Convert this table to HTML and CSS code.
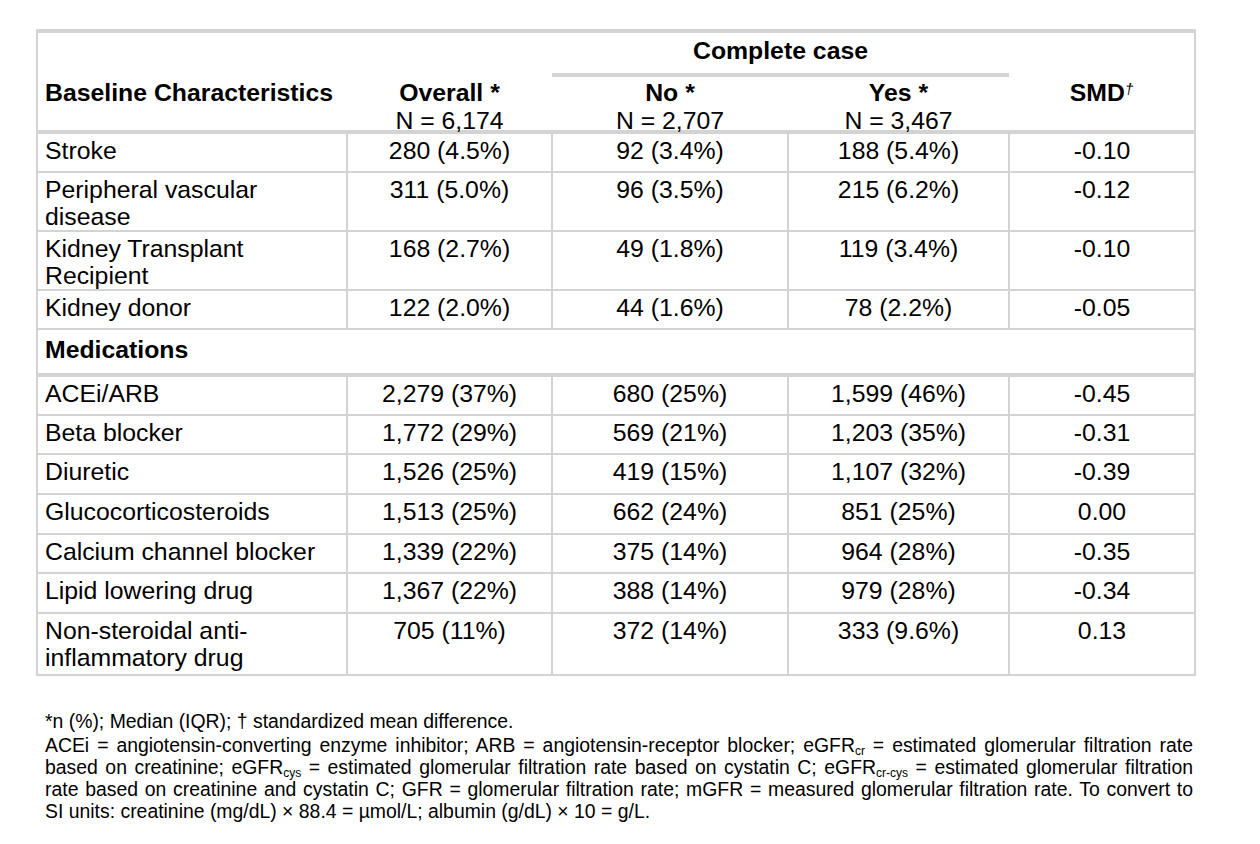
FILE: index.html
```html
<!DOCTYPE html>
<html lang="en">
<head>
    <meta charset="UTF-8">
    <meta name="viewport" content="width=device-width, initial-scale=1.0">
    <title>Baseline Characteristics by Complete Case</title>
    <link rel="stylesheet" href="styles.css">
</head>
<body>

    <div class="page">
        <table class="summary">
            <colgroup>
                <col class="col-label">
                <col class="col-overall">
                <col class="col-no">
                <col class="col-yes">
                <col class="col-smd">
            </colgroup>
            <thead>
                <tr class="spanner-row">
                    <th></th>
                    <th></th>
                    <th colspan="2" class="spanner">Complete case</th>
                    <th></th>
                </tr>
                <tr class="label-row">
                    <th class="left">Baseline Characteristics</th>
                    <th>Overall *<span class="n">N = 6,174</span></th>
                    <th class="under-spanner">No *<span class="n">N = 2,707</span></th>
                    <th class="under-spanner">Yes *<span class="n">N = 3,467</span></th>
                    <th>SMD<sup class="dagger">†</sup></th>
                </tr>
            </thead>
            <tbody>
                <tr>
                    <td>Stroke</td>
                    <td>280 (4.5%)</td>
                    <td>92 (3.4%)</td>
                    <td>188 (5.4%)</td>
                    <td>-0.10</td>
                </tr>
                <tr>
                    <td>Peripheral vascular<br>disease</td>
                    <td>311 (5.0%)</td>
                    <td>96 (3.5%)</td>
                    <td>215 (6.2%)</td>
                    <td>-0.12</td>
                </tr>
                <tr>
                    <td>Kidney Transplant<br>Recipient</td>
                    <td>168 (2.7%)</td>
                    <td>49 (1.8%)</td>
                    <td>119 (3.4%)</td>
                    <td>-0.10</td>
                </tr>
                <tr>
                    <td>Kidney donor</td>
                    <td>122 (2.0%)</td>
                    <td>44 (1.6%)</td>
                    <td>78 (2.2%)</td>
                    <td>-0.05</td>
                </tr>
                <tr class="group-row">
                    <td colspan="5">Medications</td>
                </tr>
                <tr>
                    <td>ACEi/ARB</td>
                    <td>2,279 (37%)</td>
                    <td>680 (25%)</td>
                    <td>1,599 (46%)</td>
                    <td>-0.45</td>
                </tr>
                <tr>
                    <td>Beta blocker</td>
                    <td>1,772 (29%)</td>
                    <td>569 (21%)</td>
                    <td>1,203 (35%)</td>
                    <td>-0.31</td>
                </tr>
                <tr>
                    <td>Diuretic</td>
                    <td>1,526 (25%)</td>
                    <td>419 (15%)</td>
                    <td>1,107 (32%)</td>
                    <td>-0.39</td>
                </tr>
                <tr>
                    <td>Glucocorticosteroids</td>
                    <td>1,513 (25%)</td>
                    <td>662 (24%)</td>
                    <td>851 (25%)</td>
                    <td>0.00</td>
                </tr>
                <tr>
                    <td>Calcium channel blocker</td>
                    <td>1,339 (22%)</td>
                    <td>375 (14%)</td>
                    <td>964 (28%)</td>
                    <td>-0.35</td>
                </tr>
                <tr>
                    <td>Lipid lowering drug</td>
                    <td>1,367 (22%)</td>
                    <td>388 (14%)</td>
                    <td>979 (28%)</td>
                    <td>-0.34</td>
                </tr>
                <tr class="last-row">
                    <td>Non-steroidal anti-<br>inflammatory drug</td>
                    <td>705 (11%)</td>
                    <td>372 (14%)</td>
                    <td>333 (9.6%)</td>
                    <td>0.13</td>
                </tr>
            </tbody>
        </table>

        <div class="notes">
            <p class="note-first">*n (%); Median (IQR); † standardized mean difference.</p>
            <p class="note-abbr">
                <span class="line">ACEi = angiotensin-converting enzyme inhibitor; ARB = angiotensin-receptor blocker; eGFR<sub>cr</sub> = estimated glomerular filtration rate</span>
                <span class="line">based on creatinine; eGFR<sub>cys</sub> = estimated glomerular filtration rate based on cystatin C; eGFR<sub>cr-cys</sub> = estimated glomerular filtration</span>
                <span class="line">rate based on creatinine and cystatin C; GFR = glomerular filtration rate; mGFR = measured glomerular filtration rate. To convert to</span>
                <span class="line last">SI units: creatinine (mg/dL) × 88.4 = µmol/L; albumin (g/dL) × 10 = g/L.</span>
            </p>
        </div>
    </div>

</body>
</html>
```

FILE: styles.css
```css
body {
    margin: 0;
    font-family: "Liberation Sans", Arial, sans-serif;
    color: #000;
    background: #fff;
}

.page {
    padding: 29px 0 0 36px;
}

.summary {
    width: 1158px;
    table-layout: fixed;
    border-collapse: collapse;
    border-top: 4px solid #d3d3d3;
    border-left: 2px solid #d3d3d3;
    border-right: 2px solid #d3d3d3;
    border-bottom: 2px solid #d3d3d3;
    font-size: 24.8px;
    line-height: 27px;
}

.col-label { width: 310px; }
.col-overall { width: 205px; }
.col-no { width: 236px; }
.col-yes { width: 221px; }
.col-smd { width: 186px; }

th, td {
    padding: 3px 7px 0;
    vertical-align: top;
    text-align: center;
}

th {
    font-weight: bold;
}

.left {
    text-align: left;
}

.spanner-row {
    height: 44px;
}

.spanner {
    padding-top: 4px;
    border-bottom: 4px solid #d3d3d3;
}

.label-row {
    height: 57px;
}

.label-row th {
    padding-top: 4px;
    line-height: 28px;
    border-bottom: 4px solid #d3d3d3;
}

.label-row .under-spanner {
    padding-top: 2px;
}

.n {
    display: block;
    margin-bottom: -5px;
    font-weight: normal;
}

.dagger {
    font-size: 15px;
    font-style: italic;
    font-weight: normal;
    vertical-align: top;
    line-height: 20px;
}

tbody tr {
    height: 39.6px;
}

tbody td {
    border: 2px solid #d3d3d3;
}

tbody td:first-child {
    text-align: left;
}

.group-row {
    height: 46px;
}

.group-row td {
    font-weight: bold;
    padding-top: 6px;
    border-bottom: 4px solid #d3d3d3;
}

.last-row td {
    padding-bottom: 3px;
}

.notes {
    margin: 35px 0 0 9px;
    width: 1148px;
    font-size: 19.4px;
    line-height: 21.7px;
}

.notes p {
    margin: 0;
}

.note-first {
    margin-bottom: 3px !important;
}

.note-abbr .line {
    display: block;
    white-space: nowrap;
    text-align: justify;
    text-align-last: justify;
}

.note-abbr .last {
    text-align-last: left;
}

sub {
    font-size: 12px;
    line-height: 0;
    vertical-align: -3px;
}
```
